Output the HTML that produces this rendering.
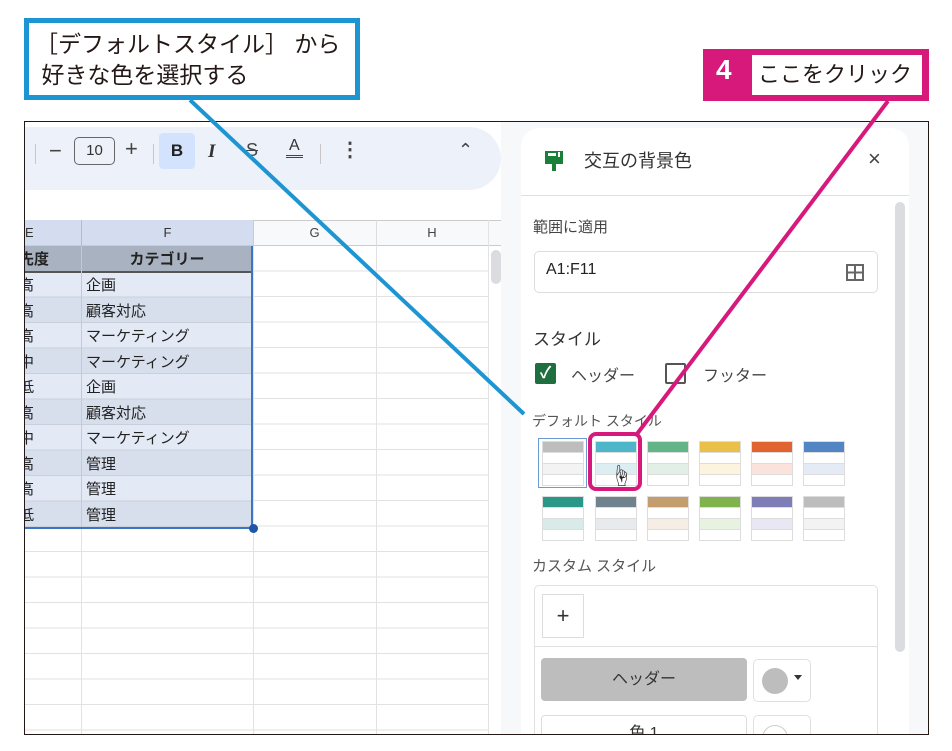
<!DOCTYPE html>
<html><head><meta charset="utf-8"><style>
*{margin:0;padding:0;box-sizing:border-box}
body{width:952px;height:751px;background:#fff;position:relative;overflow:hidden;font-family:"Liberation Sans","Noto Sans CJK JP",sans-serif;color:#222}
.a{position:absolute}
.frame{left:24px;top:121px;width:905px;height:614px;border:1px solid #231815;overflow:hidden;background:#f7f8fa}
.cell{position:absolute;font-size:15px;line-height:25px;white-space:nowrap}
.sw{position:absolute;width:42px;height:45px;border:1px solid #ddd;background:#fff}
.sw div{height:11px;border-bottom:1px solid #ddd}
</style></head><body>

<div class="a frame">
  <div class="a" style="left:0;top:0;width:476px;height:614px;background:#fff"></div>
  <div class="a" style="left:0;top:5px;width:476px;height:63px;background:#edf2fa;border-radius:0 32px 32px 0"></div>
  <div class="a" style="left:10px;top:22px;width:1px;height:20px;background:#c7c7c7"></div>
  <div class="a" style="left:24px;top:16px;font-size:22px;color:#444">−</div>
  <div class="a" style="left:49px;top:15px;width:41px;height:28px;border:1.5px solid #666;border-radius:5px;font-size:15px;text-align:center;line-height:25px;color:#333">10</div>
  <div class="a" style="left:100px;top:14px;font-size:22px;color:#444">+</div>
  <div class="a" style="left:128px;top:22px;width:1px;height:20px;background:#c7c7c7"></div>
  <div class="a" style="left:134px;top:11px;width:36px;height:36px;background:#d3e3fd;border-radius:4px;font-weight:bold;font-size:17px;text-align:center;line-height:36px;color:#222">B</div>
  <div class="a" style="left:183px;top:19px;font-size:19px;font-style:italic;font-family:'Liberation Serif',serif;font-weight:bold;color:#333">I</div>
  <div class="a" style="left:221px;top:18px;font-size:18px;color:#444;text-decoration:line-through">S</div>
  <div class="a" style="left:261px;top:15px;font-size:16px;color:#333;border-bottom:3px double #444;line-height:18px;padding:0 3px">A</div>
  <div class="a" style="left:295px;top:22px;width:1px;height:20px;background:#c7c7c7"></div>
  <div class="a" style="left:315px;top:15px;font-size:20px;font-weight:bold;color:#444">⋮</div>
  <div class="a" style="left:433px;top:18px;font-size:18px;color:#444">⌃</div>
  <div class="a" style="left:0;top:98px;width:476px;height:26px;background:#f8f9fa;border-top:1px solid #ccc;border-bottom:1px solid #ccc"></div>
  <div class="a" style="left:0;top:98px;width:228px;height:26px;background:#d3ddef;border-bottom:1px solid #ccc"></div>
  <div class="cell" style="left:0;top:98px;font-size:13px;color:#333">E</div>
  <div class="cell" style="left:57px;top:98px;width:171px;text-align:center;font-size:13px;color:#333">F</div>
  <div class="cell" style="left:228px;top:98px;width:123px;text-align:center;font-size:13px;color:#444">G</div>
  <div class="cell" style="left:351px;top:98px;width:112px;text-align:center;font-size:13px;color:#444">H</div>
  <div class="a" style="left:56px;top:98px;width:1px;height:26px;background:#bbb"></div>
  <div class="a" style="left:228px;top:98px;width:1px;height:26px;background:#ccc"></div>
  <div class="a" style="left:351px;top:98px;width:1px;height:26px;background:#ddd"></div>
  <div class="a" style="left:463px;top:98px;width:1px;height:520px;background:#e3e3e3"></div>
  <div class="a" style="left:0;top:124px;width:463px;height:490px;background:
    repeating-linear-gradient(to bottom,transparent 0 24.5px,#e2e2e2 24.5px 25.5px)"></div>
  <div class="a" style="left:56px;top:124px;width:1px;height:490px;background:#e2e2e2"></div>
  <div class="a" style="left:228px;top:124px;width:1px;height:490px;background:#e2e2e2"></div>
  <div class="a" style="left:351px;top:124px;width:1px;height:490px;background:#e2e2e2"></div>
  <div class="a" style="left:466px;top:128px;width:10px;height:34px;background:#dadce0;border-radius:5px"></div>
  <div class="a" style="left:0;top:124px;width:228px;height:283px;border-right:2px solid #3a76c4;border-bottom:2px solid #3a76c4;background:
    linear-gradient(#a9b2c0 0 26px,transparent 26px),
    repeating-linear-gradient(to bottom,#e3eaf5 0 24.5px,#c9d0dc 24.5px 25.5px,#d8dfec 25.5px 50px,#c9d0dc 50px 51px) 0 26px/100% 100% no-repeat"></div>
  <div class="a" style="left:0;top:149px;width:226px;height:2px;background:#555"></div>
  <div class="a" style="left:56px;top:124px;width:1px;height:281px;background:#c3cad6"></div>
  <div class="a" style="left:224px;top:402px;width:9px;height:9px;background:#1f57a8;border-radius:50%"></div>
  <div class="cell" style="left:-6px;top:125px;font-weight:bold">先度</div>
  <div class="cell" style="left:57px;top:125px;width:170px;text-align:center;font-weight:bold">カテゴリー</div>
  <div class="cell" style="left:-6px;top:151px;line-height:25.5px">高<br>高<br>高<br>中<br>低<br>高<br>中<br>高<br>高<br>低</div>
  <div class="cell" style="left:61px;top:151px;line-height:25.5px">企画<br>顧客対応<br>マーケティング<br>マーケティング<br>企画<br>顧客対応<br>マーケティング<br>管理<br>管理<br>管理</div>

  <div class="a" style="left:496px;top:6px;width:388px;height:620px;background:#fff;border-radius:18px 18px 0 0"></div>
  <svg class="a" style="left:518px;top:27px" width="22" height="24" viewBox="0 0 22 24"><path d="M2 2h18v10H2z M2 12v3h7v7h4v-7h7v-3" fill="#188038"/><rect x="5" y="4" width="8" height="3" fill="#fff"/><rect x="15" y="3" width="2" height="5" fill="#fff"/></svg>
  <div class="a" style="left:559px;top:25px;font-size:18px;color:#333">交互の背景色</div>
  <div class="a" style="left:843px;top:24px;font-size:22px;color:#444">×</div>
  <div class="a" style="left:496px;top:73px;width:388px;height:1px;background:#e0e0e0"></div>
  <div class="a" style="left:870px;top:80px;width:10px;height:450px;background:#dadce0;border-radius:5px"></div>
  <div class="a" style="left:508px;top:94px;font-size:15px;color:#444">範囲に適用</div>
  <div class="a" style="left:509px;top:129px;width:344px;height:42px;border:1px solid #ddd;border-radius:5px"></div>
  <div class="a" style="left:521px;top:139px;font-size:16px;color:#222">A1:F11</div>
  <svg class="a" style="left:821px;top:142px" width="18" height="17"><rect x="1" y="1" width="16" height="15" fill="none" stroke="#666" stroke-width="2"/><path d="M9 1v15M1 8.5h16" stroke="#666" stroke-width="2"/></svg>
  <div class="a" style="left:508px;top:203px;font-size:17px;color:#333">スタイル</div>
  <div class="a" style="left:510px;top:241px;width:21px;height:21px;background:#1e6e3f;border-radius:2px;color:#fff;font-size:16px;text-align:center;line-height:21px;font-weight:bold">✓</div>
  <div class="a" style="left:546px;top:240px;font-size:16px;color:#444">ヘッダー</div>
  <div class="a" style="left:640px;top:241px;width:21px;height:21px;border:2px solid #555;border-radius:2px"></div>
  <div class="a" style="left:678px;top:240px;font-size:16px;color:#444">フッター</div>
  <div class="a" style="left:507px;top:289px;font-size:14px;color:#555">デフォルト スタイル</div>
  <div class="a" style="left:513px;top:316px;width:49px;height:50px;border:1.5px solid #6c9bd2"></div>
  <div class="sw" style="left:517px;top:319px"><div style="background:#bdbdbd"></div><div></div><div style="background:#f3f3f3"></div></div>
  <div class="sw" style="left:570px;top:319px"><div style="background:#4db6c8"></div><div></div><div style="background:#ddeef3"></div></div>
  <div class="sw" style="left:622px;top:319px"><div style="background:#63b486"></div><div></div><div style="background:#e2efe6"></div></div>
  <div class="sw" style="left:674px;top:319px"><div style="background:#e8c04a"></div><div></div><div style="background:#fcf4dc"></div></div>
  <div class="sw" style="left:726px;top:319px"><div style="background:#e06330"></div><div></div><div style="background:#fbe2da"></div></div>
  <div class="sw" style="left:778px;top:319px"><div style="background:#5384c4"></div><div></div><div style="background:#e4ebf5"></div></div>
  <div class="sw" style="left:517px;top:374px"><div style="background:#2a9889"></div><div></div><div style="background:#d8ebe8"></div></div>
  <div class="sw" style="left:570px;top:374px"><div style="background:#6f838e"></div><div></div><div style="background:#e8ebed"></div></div>
  <div class="sw" style="left:622px;top:374px"><div style="background:#c49d6f"></div><div></div><div style="background:#f6eee5"></div></div>
  <div class="sw" style="left:674px;top:374px"><div style="background:#80b24d"></div><div></div><div style="background:#e8f2e0"></div></div>
  <div class="sw" style="left:726px;top:374px"><div style="background:#7f7db7"></div><div></div><div style="background:#e8e7f3"></div></div>
  <div class="sw" style="left:778px;top:374px"><div style="background:#bdbdbd"></div><div></div><div style="background:#f3f3f3"></div></div>
  <div class="a" style="left:585px;top:337px;font-size:22px;color:#222">☝</div>
  <div class="a" style="left:507px;top:433px;font-size:15px;color:#555">カスタム スタイル</div>
  <div class="a" style="left:509px;top:463px;width:344px;height:160px;border:1px solid #e0e0e0;border-radius:5px"></div>
  <div class="a" style="left:509px;top:524px;width:344px;height:1px;background:#e0e0e0"></div>
  <div class="a" style="left:517px;top:472px;width:42px;height:44px;border:1px solid #ddd;font-size:22px;text-align:center;line-height:42px;color:#333">+</div>
  <div class="a" style="left:516px;top:536px;width:206px;height:43px;background:#bdbdbd;border-radius:4px;font-size:16px;text-align:center;line-height:43px;color:#333">ヘッダー</div>
  <div class="a" style="left:728px;top:537px;width:58px;height:43px;border:1px solid #e0e0e0;border-radius:5px"></div>
  <div class="a" style="left:737px;top:546px;width:26px;height:26px;border-radius:50%;background:#bdbdbd"></div>
  <div class="a" style="left:769px;top:553px;border:4px solid transparent;border-top:5px solid #333"></div>
  <div class="a" style="left:516px;top:593px;width:206px;height:43px;border:1px solid #ddd;border-radius:4px;font-size:16px;text-align:center;line-height:36px;color:#333">色 1</div>
  <div class="a" style="left:728px;top:593px;width:58px;height:43px;border:1px solid #e0e0e0;border-radius:5px"></div>
  <div class="a" style="left:737px;top:603px;width:26px;height:26px;border-radius:50%;border:1px solid #ccc"></div>
</div>

<div class="a" style="left:24px;top:18px;width:336px;height:82px;border:5px solid #1e95d3;background:#fff;padding:6px 0 0 6px;font-size:23px;line-height:31px;color:#231815;white-space:nowrap">［デフォルトスタイル］ から<br>&nbsp;好きな色を選択する</div>
<div class="a" style="left:703px;top:49px;width:226px;height:52px;background:#d6197b"></div>
<div class="a" style="left:716px;top:54px;font-size:28px;font-weight:bold;color:#fff">4</div>
<div class="a" style="left:752px;top:55px;width:170px;height:40px;background:#fff;font-size:22px;line-height:40px;padding-left:6px;color:#231815;white-space:nowrap;overflow:hidden">ここをクリック</div>
<svg class="a" style="left:0;top:0" width="952" height="751">
  <line x1="190" y1="100" x2="524" y2="414" stroke="#1e95d3" stroke-width="4"/>
  <line x1="888" y1="101" x2="637" y2="434" stroke="#d6197b" stroke-width="4"/>
  <rect x="590" y="434" width="50" height="55" rx="6" fill="none" stroke="#d6197b" stroke-width="4"/>
</svg>
</body></html>
